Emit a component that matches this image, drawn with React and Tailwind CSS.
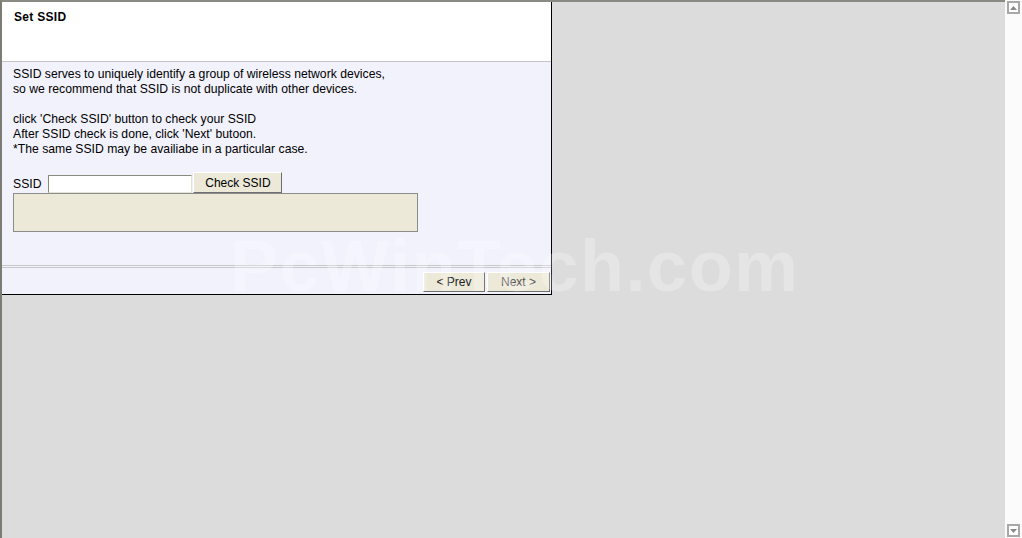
import React, { useState } from "react";

const SetSsid = () => {
  const [ssid, setSsid] = useState("");

  return (
    <div className="w-[550px] bg-[#f2f2fc] border-r border-b border-black flex flex-col">
      <div className="h-[60px] bg-white border-b border-[#c4c4c4] px-[12px] pt-[6px]">
        <h1 className="text-[12px] font-bold text-black tracking-[0.3px]">Set SSID</h1>
      </div>
      <div className="px-[11px] pt-[5px] text-[12.2px] leading-[15px] text-black">
        <p>
          SSID serves to uniquely identify a group of wireless network devices,
          <br />
          so we recommend that SSID is not duplicate with other devices.
        </p>
        <p className="mt-[15px]">
          click 'Check SSID' button to check your SSID
          <br />
          After SSID check is done, click 'Next' butoon.
          <br />
          *The same SSID may be availiabe in a particular case.
        </p>
        <div className="mt-[15px] flex items-end">
          <span className="mr-[7px] mb-[1px]">SSID</span>
          <input
            type="text"
            value={ssid}
            onChange={(e) => setSsid(e.target.value)}
            className="w-[144px] h-[18px] bg-white border border-[#8a8a80] border-r-[#e4e2d6] border-b-[#e4e2d6] outline-none text-[12px] px-1"
          />
          <button className="ml-[1px] w-[89px] h-[21px] bg-[#ece9d8] border border-white border-r-[#6f6f6f] border-b-[#6f6f6f] text-[12px] leading-none">
            Check SSID
          </button>
        </div>
        <div className="w-[405px] h-[39px] bg-[#ece9d8] border border-[#8c8c8c]"></div>
      </div>
      <div className="mt-[33px] border-t border-b border-[#c8c8c8] h-[3px]"></div>
      <div className="flex justify-end pt-[4px] pb-[2px] pr-[1px] gap-[2px]">
        <button className="w-[62px] h-[20px] bg-[#ece9d8] border border-white border-r-[#6f6f6f] border-b-[#6f6f6f] text-[12px] leading-none text-[#222]">
          &lt; Prev
        </button>
        <button className="w-[63px] h-[20px] bg-[#ece9d8] border border-white border-r-[#6f6f6f] border-b-[#6f6f6f] text-[12px] leading-none text-[#555]">
          Next &gt;
        </button>
      </div>
    </div>
  );
};

const ScrollBar = () => (
  <div className="w-[17px] bg-[#fbfbfb] flex flex-col justify-between items-center py-[1px]">
    <div className="w-[13px] h-[13px] border-2 border-[#a8a8a8] bg-white flex items-center justify-center">
      <svg width="7" height="4" viewBox="0 0 7 4">
        <path d="M3.5 0 L7 4 L0 4 Z" fill="#8a8a8a" />
      </svg>
    </div>
    <div className="w-[13px] h-[13px] border-2 border-[#a8a8a8] bg-white flex items-center justify-center">
      <svg width="7" height="4" viewBox="0 0 7 4">
        <path d="M0 0 L7 0 L3.5 4 Z" fill="#8a8a8a" />
      </svg>
    </div>
  </div>
);

export default function App() {
  return (
    <div
      className="relative w-[1022px] h-[538px] flex bg-[#dcdcdc] overflow-hidden"
      style={{ fontFamily: '"Liberation Sans", Arial, sans-serif' }}
    >
      <div className="flex-1 border-t-2 border-l-2 border-[#7c7c74] border-t-[#8a8a84]">
        <SetSsid />
      </div>
      <ScrollBar />
      <div className="absolute left-[230px] top-[230px] text-[72px] font-bold leading-none tracking-[1.5px] text-white/25 pointer-events-none select-none">
        PcWinTech.com
      </div>
    </div>
  );
}
